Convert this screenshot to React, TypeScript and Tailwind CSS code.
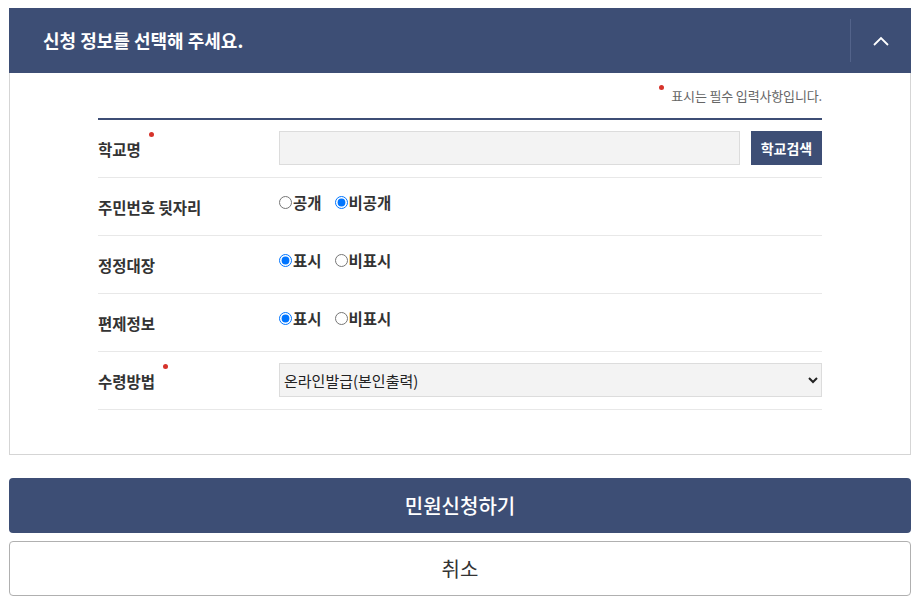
import React from "react";

const font = { fontFamily: '"Noto Sans CJK KR", "Noto Sans", sans-serif' };

function Dot({ className = "" }: { className?: string }) {
  return <span className={`inline-block w-[5px] h-[5px] rounded-full bg-[#d6332b] ${className}`} />;
}

function Row({ label, required, children, radio }: { label: string; required?: boolean; children: React.ReactNode; radio?: boolean }) {
  return (
    <div className="flex border-b border-[#e8e8e8] h-[58px]">
      <div className="w-[181px] flex items-center pt-[2px]">
        <span className="text-[15.5px] font-bold text-[#333] leading-none">{label}</span>
        {required && <Dot className="ml-[8px] -mt-[30px]" />}
      </div>
      <div className={`flex-1 flex ${radio ? "items-start pt-[13px]" : "items-start pt-[11px]"}`}>{children}</div>
    </div>
  );
}

function Radio({ name, label, checked }: { name: string; label: string; checked?: boolean }) {
  return (
    <label className="flex items-center text-[15.5px] font-bold text-[#333] leading-[22px] mr-[13px]">
      <input type="radio" name={name} defaultChecked={checked} className="m-0 mr-[1px] w-[13px] h-[13px]" />
      {label}
    </label>
  );
}

export default function App() {
  return (
    <div className="w-[921px] h-[604px] bg-white pt-[8px]" style={font}>
      <div className="ml-[9px] w-[902px]">
        <div className="h-[65px] bg-[#3d4e75] flex items-center">
          <div className="flex-1 pl-[34px] text-white text-[18px] font-bold">신청 정보를 선택해 주세요.</div>
          <div className="w-px h-[43px] bg-[#53638a]" />
          <div className="w-[60px] flex items-center justify-center">
            <svg width="18" height="12" viewBox="0 0 18 12" fill="none">
              <path d="M2 10 L9 3 L16 10" stroke="white" strokeWidth="1.8" />
            </svg>
          </div>
        </div>
        <div className="border border-t-0 border-[#d5d5d5] px-[88px] pb-[44px]">
          <div className="h-[45px] flex items-center justify-end">
            <Dot className="-mt-[16px] mr-[7px]" />
            <span className="text-[13px] text-[#666] tracking-[-0.15px]">표시는 필수 입력사항입니다.</span>
          </div>
          <div className="h-[2px] bg-[#3d4e75]" />
          <Row label="학교명" required>
            <input className="w-[461px] h-[34px] bg-[#f3f3f3] border border-[#dcdcdc]" />
            <button className="ml-[11px] w-[71px] h-[34px] bg-[#3d4e75] text-white text-[14px] font-bold">학교검색</button>
          </Row>
          <Row label="주민번호 뒷자리" radio>
            <Radio name="a" label="공개" />
            <Radio name="a" label="비공개" checked />
          </Row>
          <Row label="정정대장" radio>
            <Radio name="b" label="표시" checked />
            <Radio name="b" label="비표시" />
          </Row>
          <Row label="편제정보" radio>
            <Radio name="c" label="표시" checked />
            <Radio name="c" label="비표시" />
          </Row>
          <Row label="수령방법" required>
            <select className="w-[543px] h-[34px] bg-[#f3f3f3] border border-[#dcdcdc] text-[15px] text-[#222] pl-0" style={font} defaultValue="a">
              <option value="a">온라인발급(본인출력)</option>
            </select>
          </Row>
        </div>
        <button className="mt-[23px] w-full h-[55px] rounded-[4px] bg-[#3d4e75] text-white text-[20px] font-medium">민원신청하기</button>
        <button className="mt-[8px] w-full h-[55px] rounded-[4px] border border-[#b0b0b0] bg-white text-[#333] text-[20px]">취소</button>
      </div>
    </div>
  );
}
